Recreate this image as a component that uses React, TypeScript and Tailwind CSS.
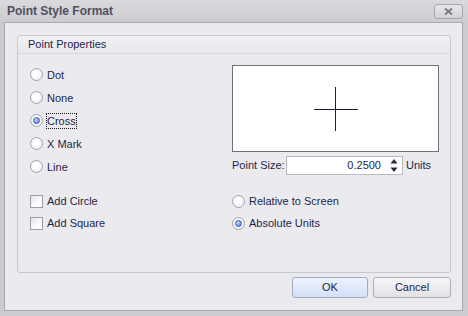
import React from "react";

const Radio = ({ checked = false }: { checked?: boolean }) => (
  <div className="w-[13px] h-[13px] shrink-0 rounded-full border border-[#a4a4ac] bg-[radial-gradient(circle_at_45%_40%,#ffffff_35%,#d9d9df)] flex items-center justify-center shadow-[inset_0_0_0_1px_#f4f4f6]">
    {checked && (
      <div className="w-[7px] h-[7px] rounded-full border border-[#3a5cb4] bg-[radial-gradient(circle_at_40%_35%,#c4d6fa,#4f74d2)]" />
    )}
  </div>
);

const Check = () => (
  <div className="w-[13px] h-[13px] shrink-0 border border-[#9d9da6] bg-[linear-gradient(135deg,#e4e4e8,#ffffff_70%)]" />
);

const RadioRow = ({ label, checked, focus }: { label: string; checked?: boolean; focus?: boolean }) => (
  <div className="h-[23px] flex items-center gap-[3px]">
    <Radio checked={checked} />
    <span className={`border leading-[14px] ${focus ? "border-dotted border-[#1a1a1a]" : "border-transparent"}`}>
      {label}
    </span>
  </div>
);

const CheckRow = ({ label }: { label: string }) => (
  <div className="h-[22px] flex items-center gap-[4px]">
    <Check />
    <span>{label}</span>
  </div>
);

const BottomRadio = ({ label, checked }: { label: string; checked?: boolean }) => (
  <div className="h-[22px] flex items-center gap-[4px]">
    <Radio checked={checked} />
    <span>{label}</span>
  </div>
);

export default function App() {
  return (
    <div className="w-[468px] h-[316px] flex flex-col bg-[#cbcbd1] font-['Liberation_Sans',Arial,sans-serif] text-[11px] text-[#1f1f4a] overflow-hidden">
      {/* title bar */}
      <div className="h-[22px] shrink-0 flex items-center justify-between pl-[7px] pr-[5px] bg-[linear-gradient(#dadade,#cbcbd1)]">
        <span className="text-[12px] font-bold text-[#50505e]">Point Style Format</span>
        <div className="w-[29px] h-[15px] rounded-[3px] border border-[#a6a6ae] bg-[linear-gradient(#e6e6ea,#d2d2d8)] flex items-center justify-center">
          <svg width="9" height="7" viewBox="0 0 9 7">
            <path d="M1 0.5 L8 6.5 M8 0.5 L1 6.5" stroke="#7c7c86" strokeWidth="2" />
          </svg>
        </div>
      </div>

      {/* body */}
      <div className="flex-1 ml-[4px] mr-[5px] mb-[5px] border border-[#a9a9b1] bg-[#ebebef] flex flex-col">
        <div className="mt-[12px] ml-[12px] mr-[11px] h-[238px] rounded-[3px] border border-[#c8c8d0] flex flex-col">
          <div className="h-[18px] box-border border-b border-[#d6d6dc] bg-[linear-gradient(#f1f1f4,#e9e9ed)] rounded-t-[3px] flex items-center pl-[10px] text-[#24244c]">
            Point Properties
          </div>

          <div className="pl-[12px] pr-[11px] pt-[9px]">
            <div className="grid grid-cols-[202px_207px]">
              <div className="flex flex-col">
                <RadioRow label="Dot" />
                <RadioRow label="None" />
                <RadioRow label="Cross" checked focus />
                <RadioRow label="X Mark" />
                <RadioRow label="Line" />
              </div>
              <div className="flex flex-col pt-[2px]">
                <div className="w-[207px] h-[87px] border border-[#6f6f74] bg-white flex items-center justify-center">
                  <svg width="44" height="44" viewBox="0 0 44 44">
                    <path d="M0 22.5 H44 M21.5 0 V44" stroke="#1c1c3c" strokeWidth="1" />
                  </svg>
                </div>
                <div className="mt-[4px] h-[19px] flex items-center">
                  <span className="w-[54px]">Point Size:</span>
                  <div className="w-[117px] h-[19px] border border-[#b9b9c1] bg-white flex items-center justify-end pr-[4px]">
                    <span>0.2500</span>
                    <svg className="ml-[9px]" width="8" height="15" viewBox="0 0 8 15">
                      <path d="M4 1 L7.5 5.5 H0.5 Z M0.5 9.5 H7.5 L4 14 Z" fill="#2a2a3e" />
                    </svg>
                  </div>
                  <span className="ml-[3px]">Units</span>
                </div>
              </div>
            </div>

            <div className="mt-[12px] grid grid-cols-[202px_1fr]">
              <div className="flex flex-col">
                <CheckRow label="Add Circle" />
                <CheckRow label="Add Square" />
              </div>
              <div className="flex flex-col">
                <BottomRadio label="Relative to Screen" />
                <BottomRadio label="Absolute Units" checked />
              </div>
            </div>
          </div>
        </div>

        <div className="mt-[4px] mr-[11px] flex justify-end gap-[5px]">
          <button className="w-[76px] h-[21px] rounded-[3px] border border-[#a3abc2] bg-[linear-gradient(#eef3fd,#d3e0f8)] text-[#1f1f4a] flex items-center justify-center">
            OK
          </button>
          <button className="w-[78px] h-[21px] rounded-[3px] border border-[#adadb5] bg-[linear-gradient(#f6f6f8,#e2e2e6)] text-[#1f1f4a] flex items-center justify-center">
            Cancel
          </button>
        </div>
      </div>
    </div>
  );
}
